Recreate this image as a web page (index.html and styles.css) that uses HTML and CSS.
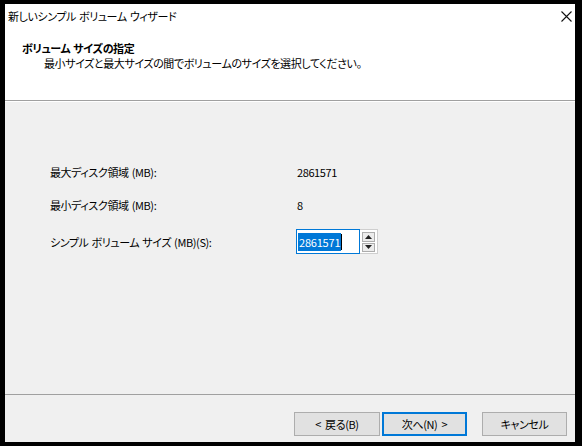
FILE: index.html
```html
<!DOCTYPE html>
<html lang="ja">
<head>
<meta charset="utf-8">
<link rel="stylesheet" href="styles.css">
</head>
<body>
<div class="window">
  <div class="titlebar">
    <span class="title">新しいシンプル ボリューム ウィザード</span>
    <svg class="close" width="11" height="11" viewBox="0 0 11 11"><path d="M0.5 0.5 L10.5 10.5 M10.5 0.5 L0.5 10.5" stroke="#111" stroke-width="1.1" fill="none"/></svg>
  </div>
  <div class="header">
    <div class="h-title">ボリューム サイズの指定</div>
    <div class="h-sub">最小サイズと最大サイズの間でボリュームのサイズを選択してください。</div>
  </div>
  <div class="body">
    <div class="row r1"><span class="label">最大ディスク領域 (MB):</span><span class="value">2861571</span></div>
    <div class="row r2"><span class="label">最小ディスク領域 (MB):</span><span class="value">8</span></div>
    <div class="row r3"><span class="label">シンプル ボリューム サイズ (MB)(S):</span>
      <div class="spin">
        <div class="edit"><span class="sel">2861571</span><span class="caret"></span></div>
        <div class="arrows">
          <div class="ab"><svg width="7" height="4" viewBox="0 0 7 4"><path d="M3.5 0 L7 4 L0 4 Z" fill="#222"/></svg></div>
          <div class="ab"><svg width="7" height="4" viewBox="0 0 7 4"><path d="M0 0 L7 0 L3.5 4 Z" fill="#222"/></svg></div>
        </div>
      </div>
    </div>
  </div>
  <div class="footer">
    <button class="btn back">&lt; 戻る(B)</button>
    <button class="btn next">次へ(N) &gt;</button>
    <button class="btn cancel">キャンセル</button>
  </div>
</div>
</body>
</html>
```
FILE: styles.css
```css
* { box-sizing: border-box; }
html, body { margin: 0; padding: 0; background: #000; }
body {
  font-family: "Noto Sans CJK JP", sans-serif;
  font-size: 11px;
  letter-spacing: -0.4px;
  word-spacing: 1px;
  font-feature-settings: "palt";
  color: #000;
  width: 582px;
  height: 446px;
  overflow: hidden;
}
.window {
  margin: 4px 7px 4px 5px;
  width: 570px;
  height: 438px;
  background: #fff;
  display: flex;
  flex-direction: column;
}
.titlebar {
  height: 24px;
  display: flex;
  align-items: center;
  justify-content: space-between;
  padding: 0 3px 0 3px;
  flex: none;
}
.title { line-height: 15px; }
.close { margin-top: 1px; }
.header {
  height: 73px;
  flex: none;
  border-bottom: 1px solid #a0a0a0;
  padding: 13px 0 0 17px;
  line-height: 15px;
}
.h-title { font-weight: bold; }
.h-sub { padding-left: 22px; }
.body {
  flex: 1;
  background: #f0f0f0;
  border-top: 1px solid #fff;
  padding: 60px 0 0 45px;
  display: flex;
  flex-direction: column;
}
.row { display: flex; align-items: center; }
.r1 { height: 20px; }
.r2 { height: 20px; margin-top: 13px; }
.r3 { height: 25px; margin-top: 14px; }
.label { width: 246px; flex: none; }
.value { padding-left: 1px; }
.spin { display: flex; height: 25px; }
.edit {
  width: 64px;
  height: 25px;
  background: #fff;
  border: 1px solid #0078d7;
  display: flex;
  align-items: center;
  padding-left: 1px;
}
.sel { background: #0078d7; color: #fff; line-height: 18px; padding: 0 1px 0 1px; letter-spacing: -0.2px; }
.caret { width: 1px; height: 16px; background: #000; }
.arrows {
  width: 18px;
  height: 25px;
  border: 1px solid #cfcfcf;
  border-left: none;
  background: #fff;
  padding: 2px 2px 1px 2px;
  display: flex;
  flex-direction: column;
  gap: 1px;
}
.ab {
  flex: 1;
  border: 1px solid #adadad;
  background: #ececec;
  display: flex;
  align-items: center;
  justify-content: center;
}
.ab svg { display: block; }
.footer {
  height: 48px;
  flex: none;
  background: #f0f0f0;
  border-top: 1px solid #a0a0a0;
  display: flex;
  justify-content: flex-end;
  align-items: flex-start;
  padding: 17px 8px 0 0;
}
.btn {
  font-family: inherit;
  font-size: 11px;
  letter-spacing: -0.4px;
  word-spacing: 2px;
  font-feature-settings: "palt";
  height: 24px;
  width: 85px;
  background: #e1e1e1;
  border: 1px solid #adadad;
  color: #000;
  padding: 0;
  margin: 0;
  line-height: 20px;
}
.back { width: 86px; }
.next { margin-left: 2px; border: 2px solid #0078d7; }
.cancel { margin-left: 15px; }
```
